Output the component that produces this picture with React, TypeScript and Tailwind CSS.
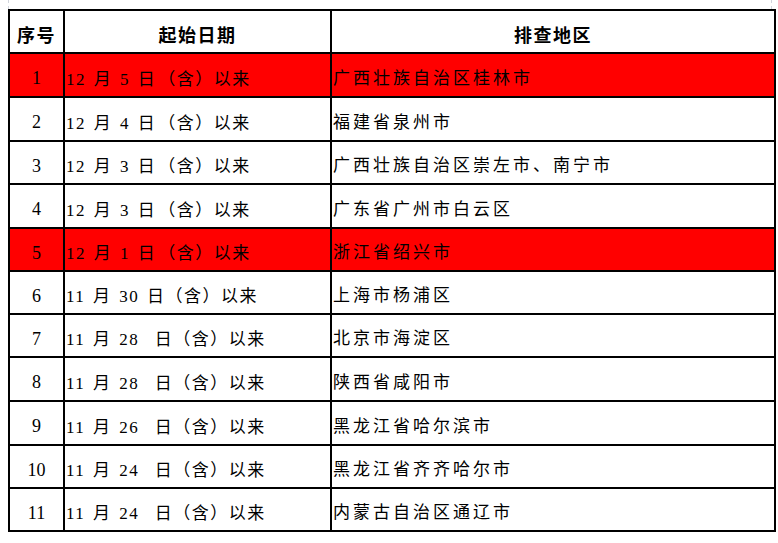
import React from "react";

type Row = { n: string; m: string; d: string; kind: "a" | "b" | "c"; area: string; red?: boolean; h: string };

const rows: Row[] = [
  { n: "1", m: "12", d: "5", kind: "a", area: "广西壮族自治区桂林市", red: true, h: "h-[44px]" },
  { n: "2", m: "12", d: "4", kind: "a", area: "福建省泉州市", h: "h-[44px]" },
  { n: "3", m: "12", d: "3", kind: "a", area: "广西壮族自治区崇左市、南宁市", h: "h-[43px]" },
  { n: "4", m: "12", d: "3", kind: "a", area: "广东省广州市白云区", h: "h-[44px]" },
  { n: "5", m: "12", d: "1", kind: "a", area: "浙江省绍兴市", red: true, h: "h-[43px]" },
  { n: "6", m: "11", d: "30", kind: "b", area: "上海市杨浦区", h: "h-[43px]" },
  { n: "7", m: "11", d: "28", kind: "c", area: "北京市海淀区", h: "h-[43px]" },
  { n: "8", m: "11", d: "28", kind: "c", area: "陕西省咸阳市", h: "h-[44px]" },
  { n: "9", m: "11", d: "26", kind: "c", area: "黑龙江省哈尔滨市", h: "h-[44px]" },
  { n: "10", m: "11", d: "24", kind: "c", area: "黑龙江省齐齐哈尔市", h: "h-[43px]" },
  { n: "11", m: "11", d: "24", kind: "c", area: "内蒙古自治区通辽市", h: "h-[43px]" },
];

function DateText({ r }: { r: Row }) {
  if (r.kind === "a") {
    return (
      <>
        {`${r.m} 月 ${r.d} 日`}
        <span className="inline-block w-[2px]" />
        {"（含）以来"}
      </>
    );
  }
  if (r.kind === "b") {
    return <>{`${r.m} 月 ${r.d} 日（含）以来`}</>;
  }
  return <>{`${r.m} 月 ${r.d}  日（含）以来`}</>;
}

export default function App() {
  return (
    <div className="w-[778px] h-[543px] bg-white font-['Liberation_Serif','Noto_Sans_CJK_SC',serif] text-black">
      <div className="flex h-[9px]">
        <div className="ml-[8px] w-[764px] border-l border-r border-dashed border-gray-300" />
      </div>
      <div className="ml-[8px] w-[768px] border-t-2 border-l-2 border-black">
        <div className="flex h-[43px] border-b-2 border-black font-bold text-[18px] tracking-[1.5px]">
          <div className="w-[55px] border-r-2 border-black flex items-center justify-center pt-[10px]">
            序号
          </div>
          <div className="w-[267px] border-r-2 border-black flex items-center justify-center pt-[10px]">
            起始日期
          </div>
          <div className="w-[444px] border-r-2 border-black flex items-center justify-center pt-[10px]">
            排查地区
          </div>
        </div>
        {rows.map((r) => (
          <div
            key={r.n}
            className={`flex ${r.h} border-b-2 border-black ${r.red ? "bg-[#ff0000]" : "bg-white"}`}
          >
            <div className="w-[55px] border-r-2 border-black flex items-center justify-center pt-[7px] text-[18px]">
              {r.n}
            </div>
            <div className="w-[267px] border-r-2 border-black flex items-center pl-[1px] pt-[9px] text-[17px] tracking-[1.5px] [word-spacing:2px] whitespace-pre">
              <DateText r={r} />
            </div>
            <div className="w-[444px] border-r-2 border-black flex items-center pl-[1px] pt-[7px] text-[17px] tracking-[3px] whitespace-pre">
              {r.area}
            </div>
          </div>
        ))}
      </div>
    </div>
  );
}
